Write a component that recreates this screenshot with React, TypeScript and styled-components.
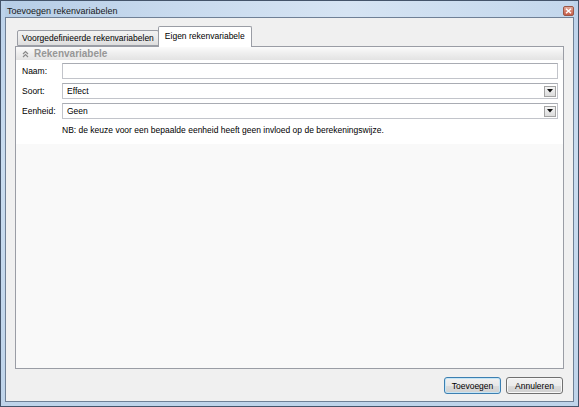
import React from "react";
import styled, { createGlobalStyle } from "styled-components";

const GlobalStyle = createGlobalStyle`
    html, body {
        margin: 0;
        padding: 0;
        background: #ffffff;
    }
    * {
        box-sizing: border-box;
    }
`

const Window = styled.div`
    width: 579px;
    height: 407px;
    display: flex;
    flex-direction: column;
    padding: 0 4px 4px 4px;
    border: 1px solid #44546a;
    background: linear-gradient(180deg, #bcd2ea 0%, #c9dcef 40%, #bfd4ea 100%);
    font-family: "Liberation Sans", Arial, sans-serif;
    font-size: 8.5px;
    color: #000;
`

const TitleBar = styled.div`
    height: 16px;
    display: flex;
    align-items: center;
    justify-content: space-between;
    padding-left: 2px;
    background: linear-gradient(90deg, #b6cde6 0%, #c8daee 30%, #d6e4f3 60%, #c3d7ec 100%);
`

const TitleText = styled.span`
    font-size: 9px;
    color: #1a1a1a;
    padding-top: 3px;
`

const CloseButton = styled.div`
    width: 11px;
    height: 10px;
    margin-top: 3px;
    border: 1px solid #9a5646;
    border-radius: 2px;
    background: linear-gradient(180deg, #e3ab9c 0%, #d37a66 55%, #c85f4a 100%);
    display: flex;
    align-items: center;
    justify-content: center;
`

const Client = styled.div`
    flex: 1;
    display: flex;
    flex-direction: column;
    border: 1px solid #6f8096;
    background: #f0f0f0;
    padding: 8px 9px 7px 9px;
`

const TabStrip = styled.div`
    height: 20px;
    display: flex;
    align-items: flex-end;
    padding-left: 2px;
    position: relative;
    z-index: 1;
`

const Tab = styled.div<{ $active?: boolean }>`
    height: ${p => p.$active ? "21px" : "16px"};
    margin-bottom: ${p => p.$active ? "-1px" : "0"};
    margin-left: ${p => p.$active ? "-1px" : "0"};
    padding: ${p => p.$active ? "0 6px 3px 6px" : "0 4px"};
    display: flex;
    align-items: center;
    border: 1px solid #9a9da5;
    border-bottom: ${p => p.$active ? "none" : "1px solid #9a9da5"};
    border-radius: 2px 2px 0 0;
    background: ${p => p.$active ? "#ffffff" : "linear-gradient(180deg, #f2f2f2 0%, #ebebeb 50%, #dddddd 100%)"};
    white-space: nowrap;
`

const Panel = styled.div`
    flex: 1;
    display: flex;
    flex-direction: column;
    border: 1px solid #9a9da5;
    background: #f9f9f9;
`

const SectionHeader = styled.div`
    height: 13px;
    display: flex;
    align-items: center;
    gap: 5px;
    padding-left: 6px;
    background: linear-gradient(180deg, #fbfbfb 0%, #eeeeee 50%, #e3e3e3 100%);
`

const SectionTitle = styled.span`
    font-size: 10px;
    font-weight: bold;
    color: #979797;
`

const Form = styled.div`
    display: flex;
    flex-direction: column;
    gap: 4px;
    padding: 3px 5px 8px 6px;
    background: #ffffff;
`

const Row = styled.div`
    display: flex;
    align-items: center;
`

const Label = styled.span`
    width: 40px;
    flex-shrink: 0;
`

const Field = styled.div`
    flex: 1;
    height: 16px;
    display: flex;
    align-items: center;
    justify-content: space-between;
    padding: 0 1px 0 4px;
    border: 1px solid #c2c4ca;
    border-top-color: #a9acb3;
    background: #ffffff;
`

const DropButton = styled.div`
    width: 12px;
    height: 11px;
    border: 1px solid #a3a3a3;
    background: linear-gradient(180deg, #f4f4f4 0%, #dcdcdc 100%);
    display: flex;
    align-items: center;
    justify-content: center;
`

const Note = styled.div`
    padding-left: 40px;
    padding-top: 2px;
    line-height: 11px;
`

const ButtonRow = styled.div`
    display: flex;
    justify-content: flex-end;
    gap: 5px;
    margin-top: 8px;
    padding-right: 1px;
`

const Button = styled.div<{ $default?: boolean }>`
    width: 57px;
    height: 17px;
    display: flex;
    align-items: center;
    justify-content: center;
    border: 1px solid ${p => p.$default ? "#3c7fb1" : "#707070"};
    border-radius: 3px;
    box-shadow: ${p => p.$default ? "inset 0 0 0 1px #c4e5f6" : "inset 0 0 0 1px #f8f8f8"};
    background: ${p => p.$default
        ? "linear-gradient(180deg, #f0f0f0 0%, #e8e8e8 50%, #dcdcdc 51%, #d0d0d0 100%)"
        : "linear-gradient(180deg, #f2f2f2 0%, #ebebeb 50%, #dddddd 51%, #cfcfcf 100%)"};
`

const ChevronsUp = () => (
    <svg width="7" height="8" viewBox="0 0 7 8">
        <path d="M1 4 L3.5 1.5 L6 4 M1 7 L3.5 4.5 L6 7" fill="none" stroke="#8a8a8a" strokeWidth="1.2" />
    </svg>
)

const Arrow = () => (
    <svg width="6" height="4" viewBox="0 0 6 4">
        <path d="M0 0 H6 L3 3.5 Z" fill="#111" />
    </svg>
)

const CloseGlyph = () => (
    <svg width="7" height="6" viewBox="0 0 7 6">
        <path d="M1 0.8 L6 5.2 M6 0.8 L1 5.2" stroke="#ffffff" strokeWidth="1.5" />
    </svg>
)

const App = () => {
    return (
        <>
            <GlobalStyle />
            <Window>
                <TitleBar>
                    <TitleText>Toevoegen rekenvariabelen</TitleText>
                    <CloseButton><CloseGlyph /></CloseButton>
                </TitleBar>
                <Client>
                    <TabStrip>
                        <Tab>Voorgedefinieerde rekenvariabelen</Tab>
                        <Tab $active>Eigen rekenvariabele</Tab>
                    </TabStrip>
                    <Panel>
                        <SectionHeader>
                            <ChevronsUp />
                            <SectionTitle>Rekenvariabele</SectionTitle>
                        </SectionHeader>
                        <Form>
                            <Row>
                                <Label>Naam:</Label>
                                <Field />
                            </Row>
                            <Row>
                                <Label>Soort:</Label>
                                <Field>Effect<DropButton><Arrow /></DropButton></Field>
                            </Row>
                            <Row>
                                <Label>Eenheid:</Label>
                                <Field>Geen<DropButton><Arrow /></DropButton></Field>
                            </Row>
                            <Note>NB: de keuze voor een bepaalde eenheid heeft geen invloed op de berekeningswijze.</Note>
                        </Form>
                    </Panel>
                    <ButtonRow>
                        <Button $default>Toevoegen</Button>
                        <Button>Annuleren</Button>
                    </ButtonRow>
                </Client>
            </Window>
        </>
    )
}

export default App;
